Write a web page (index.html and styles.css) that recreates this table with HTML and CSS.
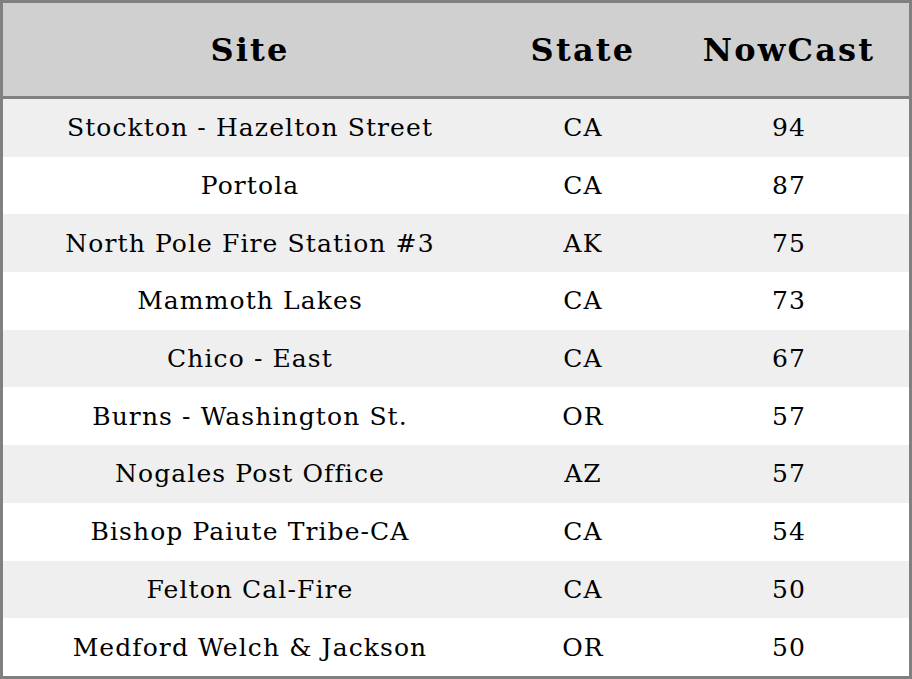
FILE: index.html
```html
<!DOCTYPE html>
<html>
<head>
<meta charset="utf-8">
<link rel="stylesheet" href="styles.css">
</head>
<body>
<table class="aq">
  <thead>
    <tr><th class="c-site">Site</th><th class="c-state">State</th><th class="c-now">NowCast</th></tr>
  </thead>
  <tbody>
    <tr><td>Stockton - Hazelton Street</td><td>CA</td><td>94</td></tr>
    <tr><td>Portola</td><td>CA</td><td>87</td></tr>
    <tr><td>North Pole Fire Station #3</td><td>AK</td><td>75</td></tr>
    <tr><td>Mammoth Lakes</td><td>CA</td><td>73</td></tr>
    <tr><td>Chico - East</td><td>CA</td><td>67</td></tr>
    <tr><td>Burns - Washington St.</td><td>OR</td><td>57</td></tr>
    <tr><td>Nogales Post Office</td><td>AZ</td><td>57</td></tr>
    <tr><td>Bishop Paiute Tribe-CA</td><td>CA</td><td>54</td></tr>
    <tr><td>Felton Cal-Fire</td><td>CA</td><td>50</td></tr>
    <tr><td>Medford Welch &amp; Jackson</td><td>OR</td><td>50</td></tr>
  </tbody>
</table>
</body>
</html>
```
FILE: styles.css
```css
html, body {
  margin: 0;
  padding: 0;
  background: #ffffff;
}
.aq {
  width: 912px;
  height: 679px;
  border-collapse: collapse;
  border: 3px solid #808080;
  font-family: "DejaVu Serif", serif;
  color: #000;
  table-layout: fixed;
}
.aq th {
  background: #d0d0d0;
  font-size: 32px;
  letter-spacing: 2.2px;
  font-weight: bold;
  height: 93px;
  padding: 0;
  text-align: center;
  border-bottom: 3px solid #808080;
}
.c-site { width: 494px; }
.c-state { width: 172px; }
.c-now { width: 240px; }
.aq td {
  font-size: 25px;
  letter-spacing: 1.1px;
  text-align: center;
  padding: 0;
  height: 57.7px;
}
.aq tbody tr:nth-child(odd) td { background: #efefef; }
.aq tbody tr:nth-child(even) td { background: #ffffff; }
```
